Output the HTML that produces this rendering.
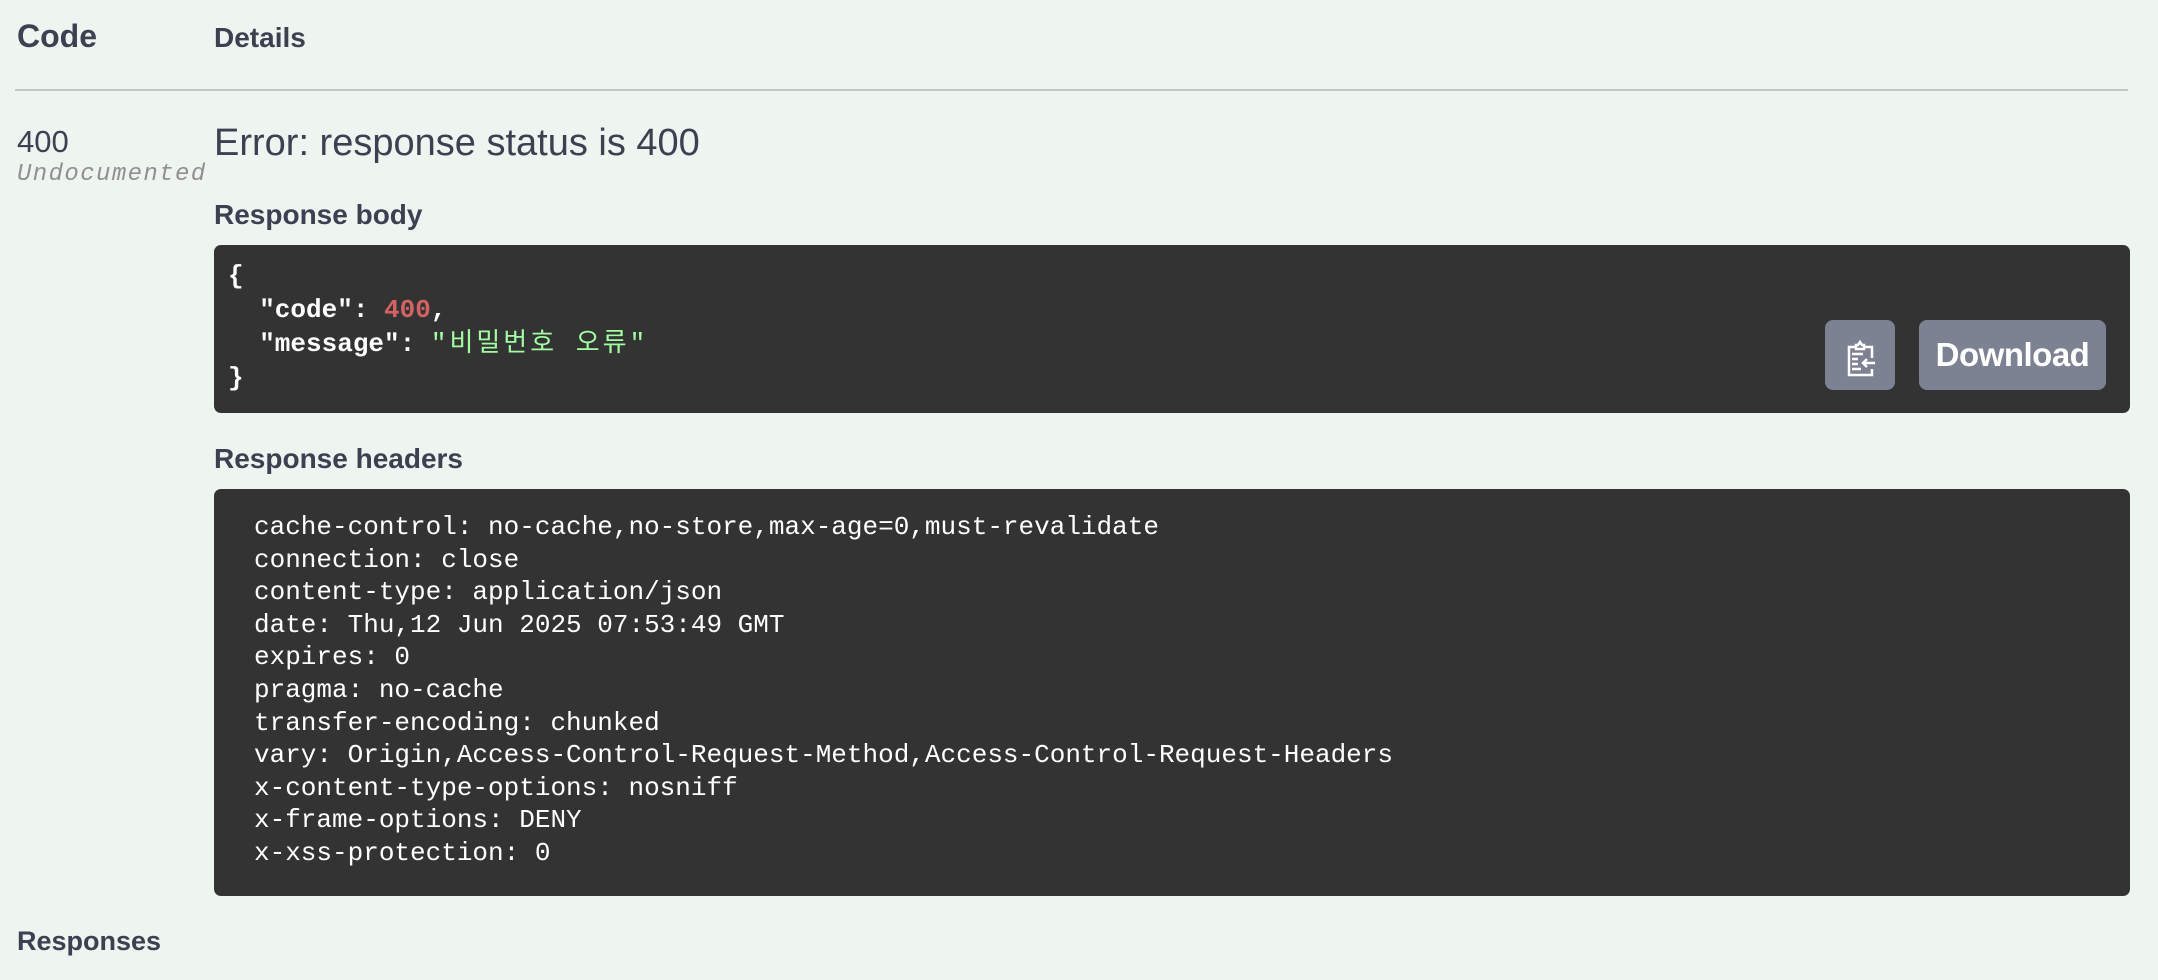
<!DOCTYPE html>
<html><head><meta charset="utf-8"><style>
html,body{margin:0;padding:0;background:#eef4f0;width:2158px;height:980px;overflow:hidden;font-family:"Liberation Sans","Noto Sans CJK KR",sans-serif;color:#3b4151}
.a{position:absolute;white-space:nowrap}
.box{position:absolute;background:#333;border-radius:7px}
.mono{font-family:"Liberation Mono","Noto Sans CJK KR",monospace}
.btn{position:absolute;background:#7d8293;border-radius:8px;color:#fff}
</style></head><body>
<div class="a" style="left:17px;top:18px;font-size:32px;font-weight:bold">Code</div>
<div class="a" style="left:214px;top:22px;font-size:28px;font-weight:bold">Details</div>
<div class="a" style="left:15px;top:89px;width:2113px;height:2px;background:#c2c6c4"></div>
<div class="a" style="left:17px;top:124px;font-size:31px">400</div>
<div class="a mono" style="left:17px;top:161px;font-size:24px;font-style:italic;color:#909090;letter-spacing:1.4px">Undocumented</div>
<div class="a" style="left:214px;top:122px;font-size:38px">Error: response status is 400</div>
<div class="a" style="left:214px;top:199px;font-size:28px;font-weight:bold">Response body</div>
<div class="box" style="left:214px;top:245px;width:1916px;height:168px"></div>
<div class="a mono" style="left:228px;top:259px;font-size:26px;line-height:34px;font-weight:bold;color:#fff">{<br>&nbsp; "code": <span style="color:#d36363">400</span>,<br>&nbsp; "message": <span style="color:#a2fca2;font-weight:normal;letter-spacing:3px">"비밀번호 오류"</span><br>}</div>
<div class="btn" style="left:1825px;top:320px;width:70px;height:70px">
<svg width="70" height="70" viewBox="0 0 70 70"><g fill="none" stroke="#fff" stroke-width="2.5"><path d="M32 27h-8v28h23v-6M47 38V27h-8"/><path d="M31 29v-4h2l2-3 2 3h2v4z"/><path d="M27 34h11M27 39h6M27 44h6M27 49h9M50 43h-12M42 39l-4 4 4 4"/></g></svg></div>
<div class="btn" style="left:1919px;top:320px;width:187px;height:70px;font-size:33px;font-weight:bold;line-height:70px;text-align:center;letter-spacing:-0.5px">Download</div>
<div class="a" style="left:214px;top:443px;font-size:28px;font-weight:bold">Response headers</div>
<div class="box" style="left:214px;top:489px;width:1916px;height:407px"></div>
<div class="a mono" style="left:254px;top:511px;font-size:26px;line-height:32.6px;color:#fff">cache-control: no-cache,no-store,max-age=0,must-revalidate<br>connection: close<br>content-type: application/json<br>date: Thu,12 Jun 2025 07:53:49 GMT<br>expires: 0<br>pragma: no-cache<br>transfer-encoding: chunked<br>vary: Origin,Access-Control-Request-Method,Access-Control-Request-Headers<br>x-content-type-options: nosniff<br>x-frame-options: DENY<br>x-xss-protection: 0</div>
<div class="a" style="left:17px;top:926px;font-size:27px;font-weight:bold">Responses</div>
</body></html>
